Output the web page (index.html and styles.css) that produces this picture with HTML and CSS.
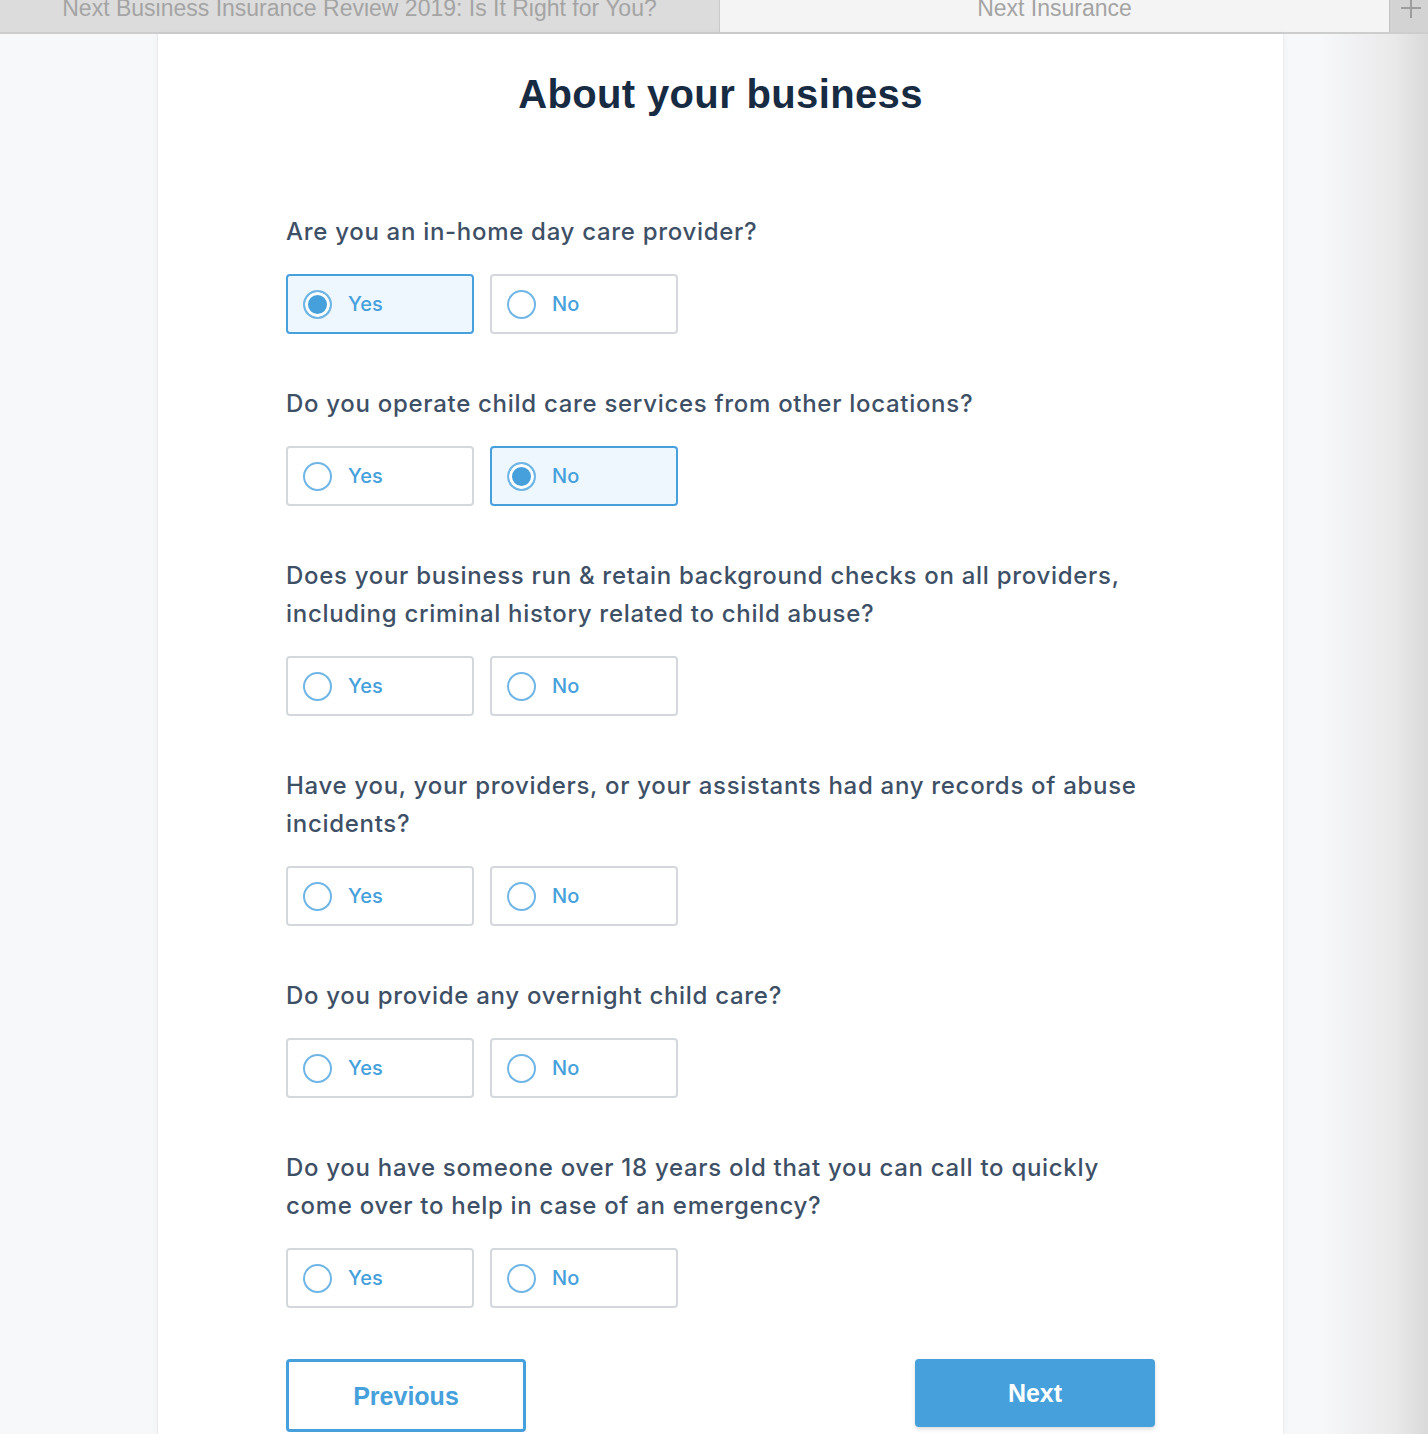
FILE: index.html
```html
<!DOCTYPE html>
<html lang="en">
<head>
<meta charset="utf-8">
<title>Next Insurance</title>
<link rel="stylesheet" href="styles.css">
</head>
<body>
<div class="tabbar">
  <div class="tab tab-inactive"><span class="tab-label">Next Business Insurance Review 2019: Is It Right for You?</span></div>
  <div class="tab tab-active"><span class="tab-label">Next Insurance</span></div>
  <div class="tab-add"><span class="plus"></span></div>
</div>
<main class="page">
  <section class="card">
    <h1 class="title">About your business</h1>

    <div class="group">
      <p class="question">Are you an in-home day care provider?</p>
      <div class="options">
        <label class="option selected"><span class="radio"></span><span class="opt-label">Yes</span></label>
        <label class="option"><span class="radio"></span><span class="opt-label">No</span></label>
      </div>
    </div>

    <div class="group">
      <p class="question">Do you operate child care services from other locations?</p>
      <div class="options">
        <label class="option"><span class="radio"></span><span class="opt-label">Yes</span></label>
        <label class="option selected"><span class="radio"></span><span class="opt-label">No</span></label>
      </div>
    </div>

    <div class="group">
      <p class="question">Does your business run &amp; retain background checks on all providers, including criminal history related to child abuse?</p>
      <div class="options">
        <label class="option"><span class="radio"></span><span class="opt-label">Yes</span></label>
        <label class="option"><span class="radio"></span><span class="opt-label">No</span></label>
      </div>
    </div>

    <div class="group">
      <p class="question">Have you, your providers, or your assistants had any records of abuse incidents?</p>
      <div class="options">
        <label class="option"><span class="radio"></span><span class="opt-label">Yes</span></label>
        <label class="option"><span class="radio"></span><span class="opt-label">No</span></label>
      </div>
    </div>

    <div class="group">
      <p class="question">Do you provide any overnight child care?</p>
      <div class="options">
        <label class="option"><span class="radio"></span><span class="opt-label">Yes</span></label>
        <label class="option"><span class="radio"></span><span class="opt-label">No</span></label>
      </div>
    </div>

    <div class="group">
      <p class="question">Do you have someone over 18 years old that you can call to quickly come over to help in case of an emergency?</p>
      <div class="options">
        <label class="option"><span class="radio"></span><span class="opt-label">Yes</span></label>
        <label class="option"><span class="radio"></span><span class="opt-label">No</span></label>
      </div>
    </div>

    <div class="actions">
      <button class="btn btn-prev" type="button">Previous</button>
      <button class="btn btn-next" type="button">Next</button>
    </div>
  </section>
</main>
</body>
</html>
```

FILE: styles.css
```css
* { box-sizing: border-box; }
html, body { margin: 0; padding: 0; }
body {
  background: linear-gradient(to right, #f7f8fa 0, #f7f8fa 1320px, #e9e9ea 1395px, #d9d9d9 1428px);
  font-family: Inter, "Liberation Sans", Arial, sans-serif;
  overflow: hidden;
  height: 1434px;
}

.tabbar {
  display: flex;
  height: 34px;
  border-bottom: 2px solid #cdcdcd;
  background: #dcdcdc;
}
.tab {
  display: flex;
  justify-content: center;
  overflow: hidden;
}
.tab-inactive {
  width: 720px;
  background: #dcdcdc;
  border-right: 1px solid #c9c9c9;
}
.tab-active {
  width: 670px;
  background: #f4f4f4;
  border-right: 1px solid #c2c2c2;
}
.tab-label {
  font-family: "Liberation Sans", Arial, sans-serif;
  font-size: 23px;
  line-height: 16px;
  color: #a4a4a4;
  white-space: nowrap;
}
.tab-add {
  flex: 1;
  background: #d3d3d3;
}
.plus {
  display: block;
  width: 20px;
  height: 20px;
  margin: -2px 0 0 11px;
  background:
    linear-gradient(#9d9d9d, #9d9d9d) center / 20px 2px no-repeat,
    linear-gradient(#9d9d9d, #9d9d9d) center / 2px 20px no-repeat;
}

.page {
  display: flex;
}
.card {
  margin-left: 157px;
  width: 1127px;
  min-height: 1400px;
  background: #fff;
  border-left: 1px solid #e7e9ec;
  border-right: 1px solid #eceef0;
  box-shadow: 0 0 8px rgba(0, 0, 0, 0.04);
  padding: 36px 128px 0 128px;
  display: flex;
  flex-direction: column;
}

.title {
  margin: 0 0 95px 0;
  font-family: "Liberation Sans", Arial, sans-serif;
  font-weight: 700;
  font-size: 40px;
  line-height: 48px;
  letter-spacing: 0.35px;
  text-align: center;
  color: #172b43;
}

.group {
  margin-bottom: 51px;
}
.question {
  margin: 0 0 23px 0;
  font-size: 24px;
  line-height: 38px;
  font-weight: 500;
  letter-spacing: 0.7px;
  color: #3e5066;
}
.options {
  display: flex;
  gap: 16px;
}
.option {
  width: 188px;
  height: 60px;
  border: 2px solid #d3d8dd;
  border-radius: 4px;
  background: #fff;
  display: flex;
  align-items: center;
  padding-left: 15px;
  gap: 16px;
}
.option.selected {
  border-color: #45a0db;
  background: #eef7fe;
}
.radio {
  width: 29px;
  height: 29px;
  border-radius: 50%;
  border: 2px solid #6fb6e6;
  background: #fff;
  flex: none;
}
.option.selected .radio {
  background: #45a0db;
  box-shadow: inset 0 0 0 3px #fff;
}
.opt-label {
  font-size: 20px;
  font-weight: 500;
  color: #45a0db;
}

.actions {
  display: flex;
  justify-content: space-between;
  align-items: flex-start;
}
.btn {
  font-family: "Liberation Sans", Arial, sans-serif;
  font-weight: 700;
  font-size: 25px;
  width: 240px;
  border-radius: 4px;
  cursor: pointer;
}
.btn-prev {
  height: 73px;
  background: #fff;
  border: 3px solid #45a0db;
  color: #45a0db;
  padding-top: 2px;
}
.btn-next {
  height: 68px;
  background: #45a0db;
  border: none;
  color: #fff;
  box-shadow: 0 2px 4px rgba(0, 0, 0, 0.15);
}
```
